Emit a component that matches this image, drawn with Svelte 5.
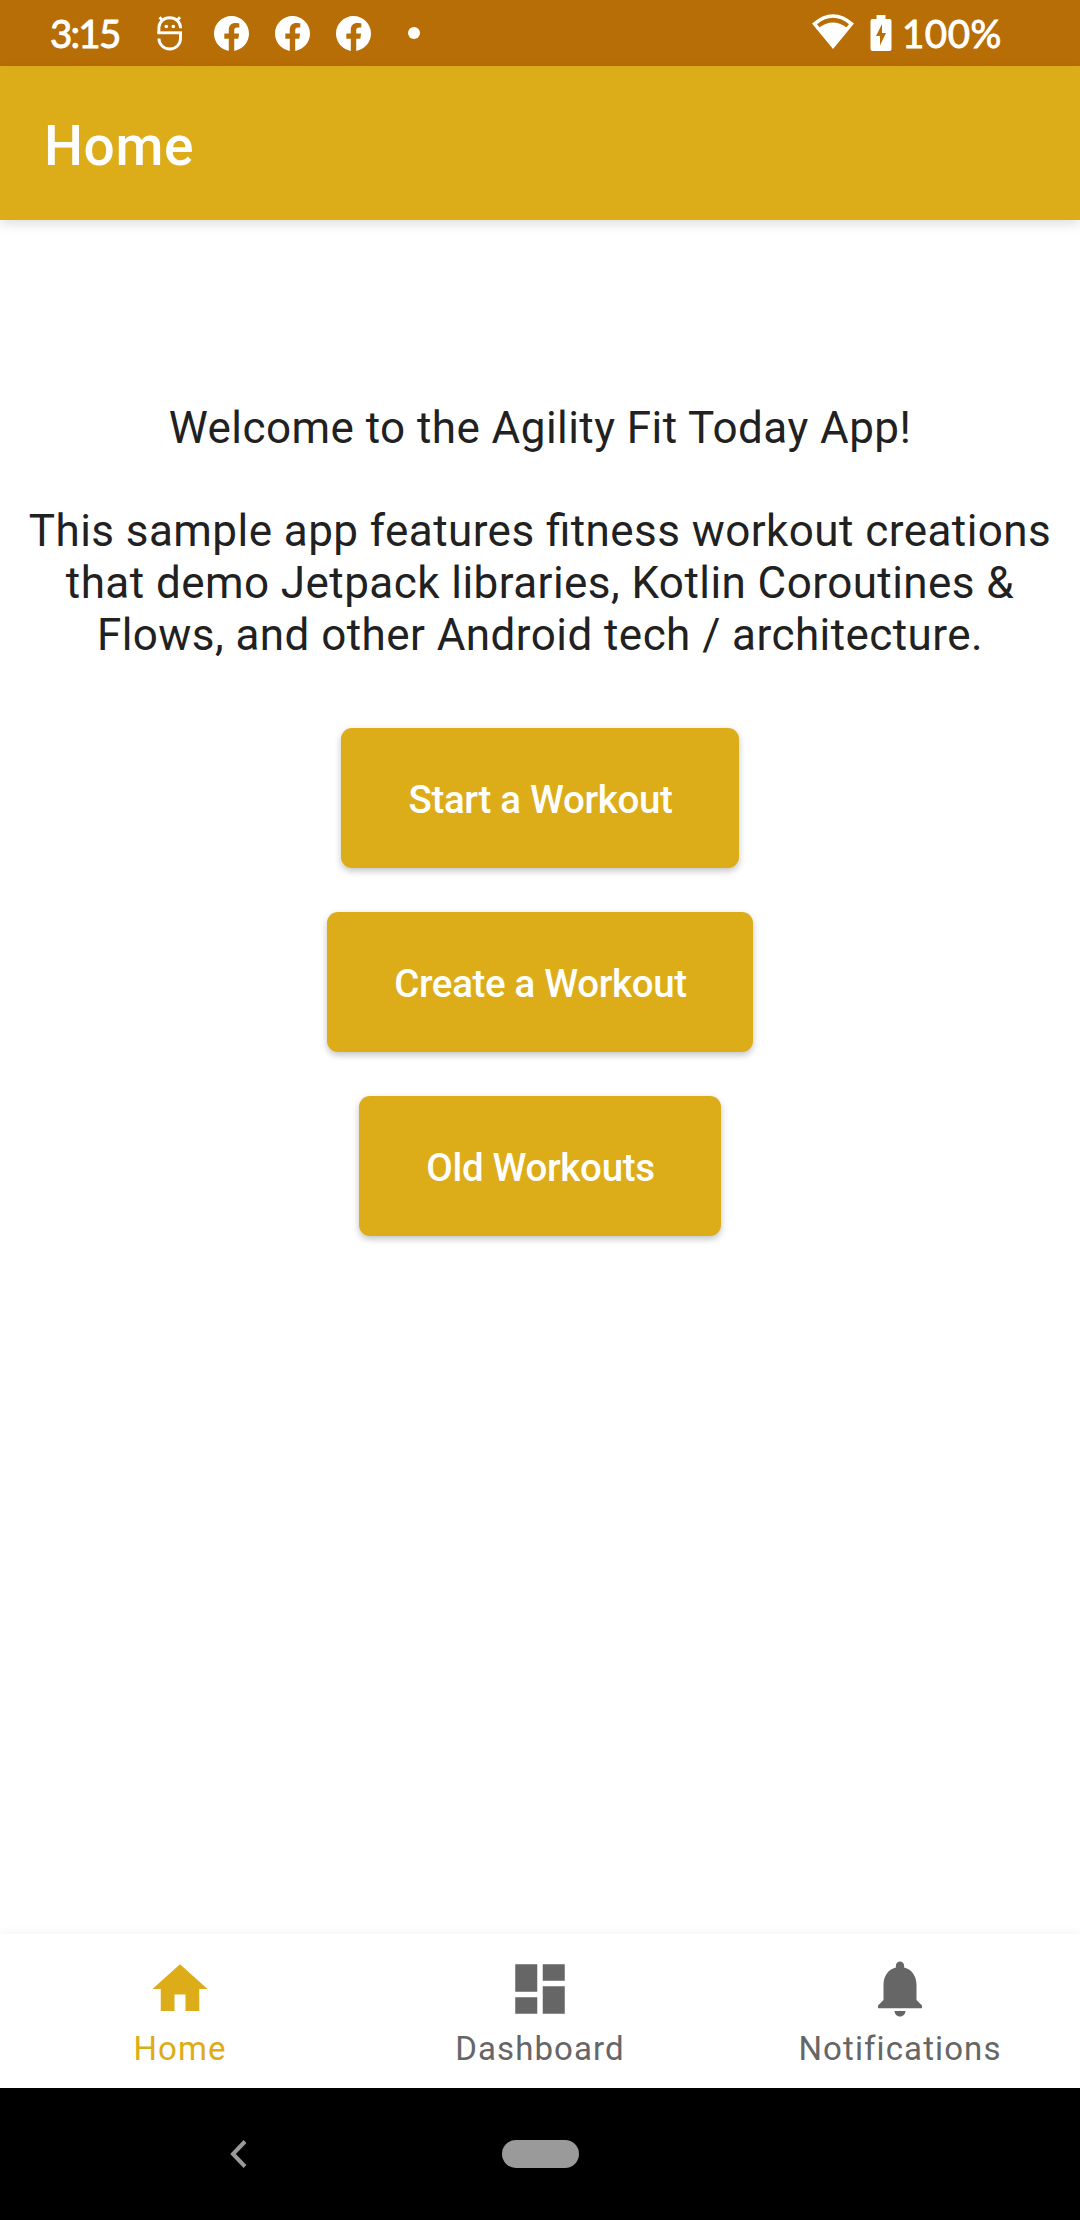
<script>
  const buttons = ['Start a Workout', 'Create a Workout', 'Old Workouts'];
  const tabs = [
    { label: 'Home', active: true, d: 'M10 20v-6h4v6h5v-8h3L12 3 2 12h3v8z' },
    { label: 'Dashboard', active: false, d: 'M3 13h8V3H3v10zm0 8h8v-6H3v6zm10 0h8V11h-8v10zm0-18v6h8V3h-8z' },
    {
      label: 'Notifications',
      active: false,
      d: 'M12 22c1.1 0 2-.9 2-2h-4c0 1.1.9 2 2 2zm6-6v-5.500c0-3.070-1.640-5.640-4.500-6.320V3.500c0-.830-.670-1.500-1.500-1.500s-1.500.670-1.500 1.500v.680C7.630 4.860 6 7.420 6 10.500V16l-2 2v1h16v-1l-2-2z'
    }
  ];
</script>

<div class="screen">
  <div class="status">
    <span class="time">3:15</span>
    <svg class="bot" viewBox="0 0 26 36" width="26" height="36" fill="none" stroke="#fff" stroke-width="2.9">
      <path d="M1.900 18V12.500A10.800 9.800 0 0 1 23.500 12.500V13.300" />
      <path d="M5.500 5.500 2.500 2.300M20 5.500l3-3.200" />
      <path d="M.4 17.800H25" />
      <path d="M23.500 17V23.600A10.800 10.400 0 0 1 1.900 23.600" />
      <circle cx="9.300" cy="11.500" r="1.800" fill="#fff" stroke="none" />
      <circle cx="16.300" cy="11.500" r="1.800" fill="#fff" stroke="none" />
    </svg>
    <div class="socials">
      {#each [0, 1, 2] as n (n)}
        <svg viewBox="0 0 24 24" width="35" height="35" fill="#fff">
          <path d="M24 12.073c0-6.627-5.373-12-12-12s-12 5.373-12 12c0 5.990 4.388 10.954 10.125 11.854v-8.385H7.078v-3.470h3.047V9.430c0-3.007 1.792-4.669 4.533-4.669 1.312 0 2.686.235 2.686.235v2.953H15.830c-1.491 0-1.956.925-1.956 1.874v2.250h3.328l-.532 3.470h-2.796v8.385C19.612 23.027 24 18.062 24 12.073z" />
        </svg>
      {/each}
    </div>
    <span class="dot"></span>
    <svg class="wifi" viewBox="0 0 42 36" width="42" height="36">
      <path d="M0 9.500Q21-9 42 9.500L21 35zM5 10.200 7.500 13.300Q21 3.500 34.500 13.300L37 10.200Q21-2.500 5 10.200z" fill="#fff" fill-rule="evenodd" />
    </svg>
    <svg class="battery" viewBox="0 0 22 36" width="22" height="36">
      <path d="M6.500 0h9v4H19.500a2 2 0 0 1 2 2V34a2 2 0 0 1-2 2H2.500a2 2 0 0 1-2-2V6a2 2 0 0 1 2-2H6.500zM12 9 6 21h4v9.500L16 18h-4z" fill="#fff" fill-rule="evenodd" />
    </svg>
    <span class="percent">100%</span>
  </div>

  <header>Home</header>

  <main>
    <p>Welcome to the Agility Fit Today App!</p>
    <p>This sample app features fitness workout creations<br />that demo Jetpack libraries, Kotlin Coroutines &amp;<br />Flows, and other Android tech / architecture.</p>
    <div class="actions">
      {#each buttons as b (b)}
        <button>{b}</button>
      {/each}
    </div>
  </main>

  <nav>
    {#each tabs as t (t.label)}
      <div class="tab" class:active={t.active}>
        <svg viewBox="0 0 24 24" width="66" height="66" fill="currentColor"><path d={t.d} /></svg>
        <span>{t.label}</span>
      </div>
    {/each}
  </nav>

  <div class="system">
    <svg class="back" viewBox="0 0 17 28" width="17" height="28" fill="none" stroke="#9a9a9a" stroke-width="4"><path d="M15 1.500 3 14l12 12.500" /></svg>
    <span class="pill"></span>
  </div>
</div>

<style>
  :global(body) { margin: 0; }
  .screen {
    width: 1080px;
    height: 2220px;
    display: flex;
    flex-direction: column;
    background: #fff;
    font-family: Roboto, sans-serif;
    overflow: hidden;
  }
  .status {
    height: 66px;
    flex: none;
    background: #b86e06;
    color: #fff;
    display: flex;
    align-items: center;
    padding-left: 50px;
    font: 400 38.5px/64px Lato, sans-serif;
    -webkit-text-stroke: 0.9px #fff;
  }
  .status svg { -webkit-text-stroke: 0; }
  .time { width: 107px; letter-spacing: -1.8px; }
  .percent { letter-spacing: 0.5px; }
  .bot { margin-right: 31px; }
  .socials { display: flex; gap: 26px; }
  .dot { width: 12px; height: 12px; border-radius: 50%; background: #fff; margin-left: 37px; }
  .wifi { margin: 0 0 3px 392px; }
  .battery { margin: 0 10px 0 16px; }
  header {
    position: relative;
    z-index: 1;
    height: 154px;
    flex: none;
    box-sizing: border-box;
    padding-left: 44px;
    background: #dcad19;
    color: #fff;
    font-size: 55px;
    font-weight: 500;
    line-height: 160px;
    letter-spacing: 0.6px;
    box-shadow: 0 4px 11px rgba(0, 0, 0, 0.13);
  }
  main { flex: 1; padding-top: 182px; text-align: center; }
  p {
    margin: 0 0 51px;
    color: #212121;
    font-size: 44px;
    line-height: 52px;
    letter-spacing: 0.44px;
    font-feature-settings: 'liga' 1;
    white-space: nowrap;
  }
  .actions { display: flex; flex-direction: column; align-items: center; gap: 44px; padding-top: 16px; }
  button {
    height: 140px;
    padding: 2px 66px 0 67px;
    border: 0;
    border-radius: 11px;
    background: #dcad19;
    color: #fff;
    font: 500 38.5px/45px Roboto, sans-serif;
    letter-spacing: -0.33px;
    box-shadow: 0 3px 7px rgba(0, 0, 0, 0.24);
  }
  nav {
    height: 154px;
    flex: none;
    display: flex;
    background: #fff;
    box-shadow: 0 0 10px rgba(0, 0, 0, 0.07);
  }
  .tab {
    flex: 1;
    display: flex;
    flex-direction: column;
    align-items: center;
    padding-top: 22px;
    color: #666;
    font-size: 33px;
    line-height: 38px;
    letter-spacing: 1.1px;
  }
  .active { color: #dcad19; }
  .tab span { margin-top: 8px; }
  .system {
    position: relative;
    z-index: 1;
    height: 132px;
    flex: none;
    display: flex;
    align-items: center;
    background: #000;
  }
  .back { margin-left: 230px; }
  .pill { width: 77px; height: 28px; border-radius: 14px; background: #9a9a9a; margin-left: 255px; }
</style>
